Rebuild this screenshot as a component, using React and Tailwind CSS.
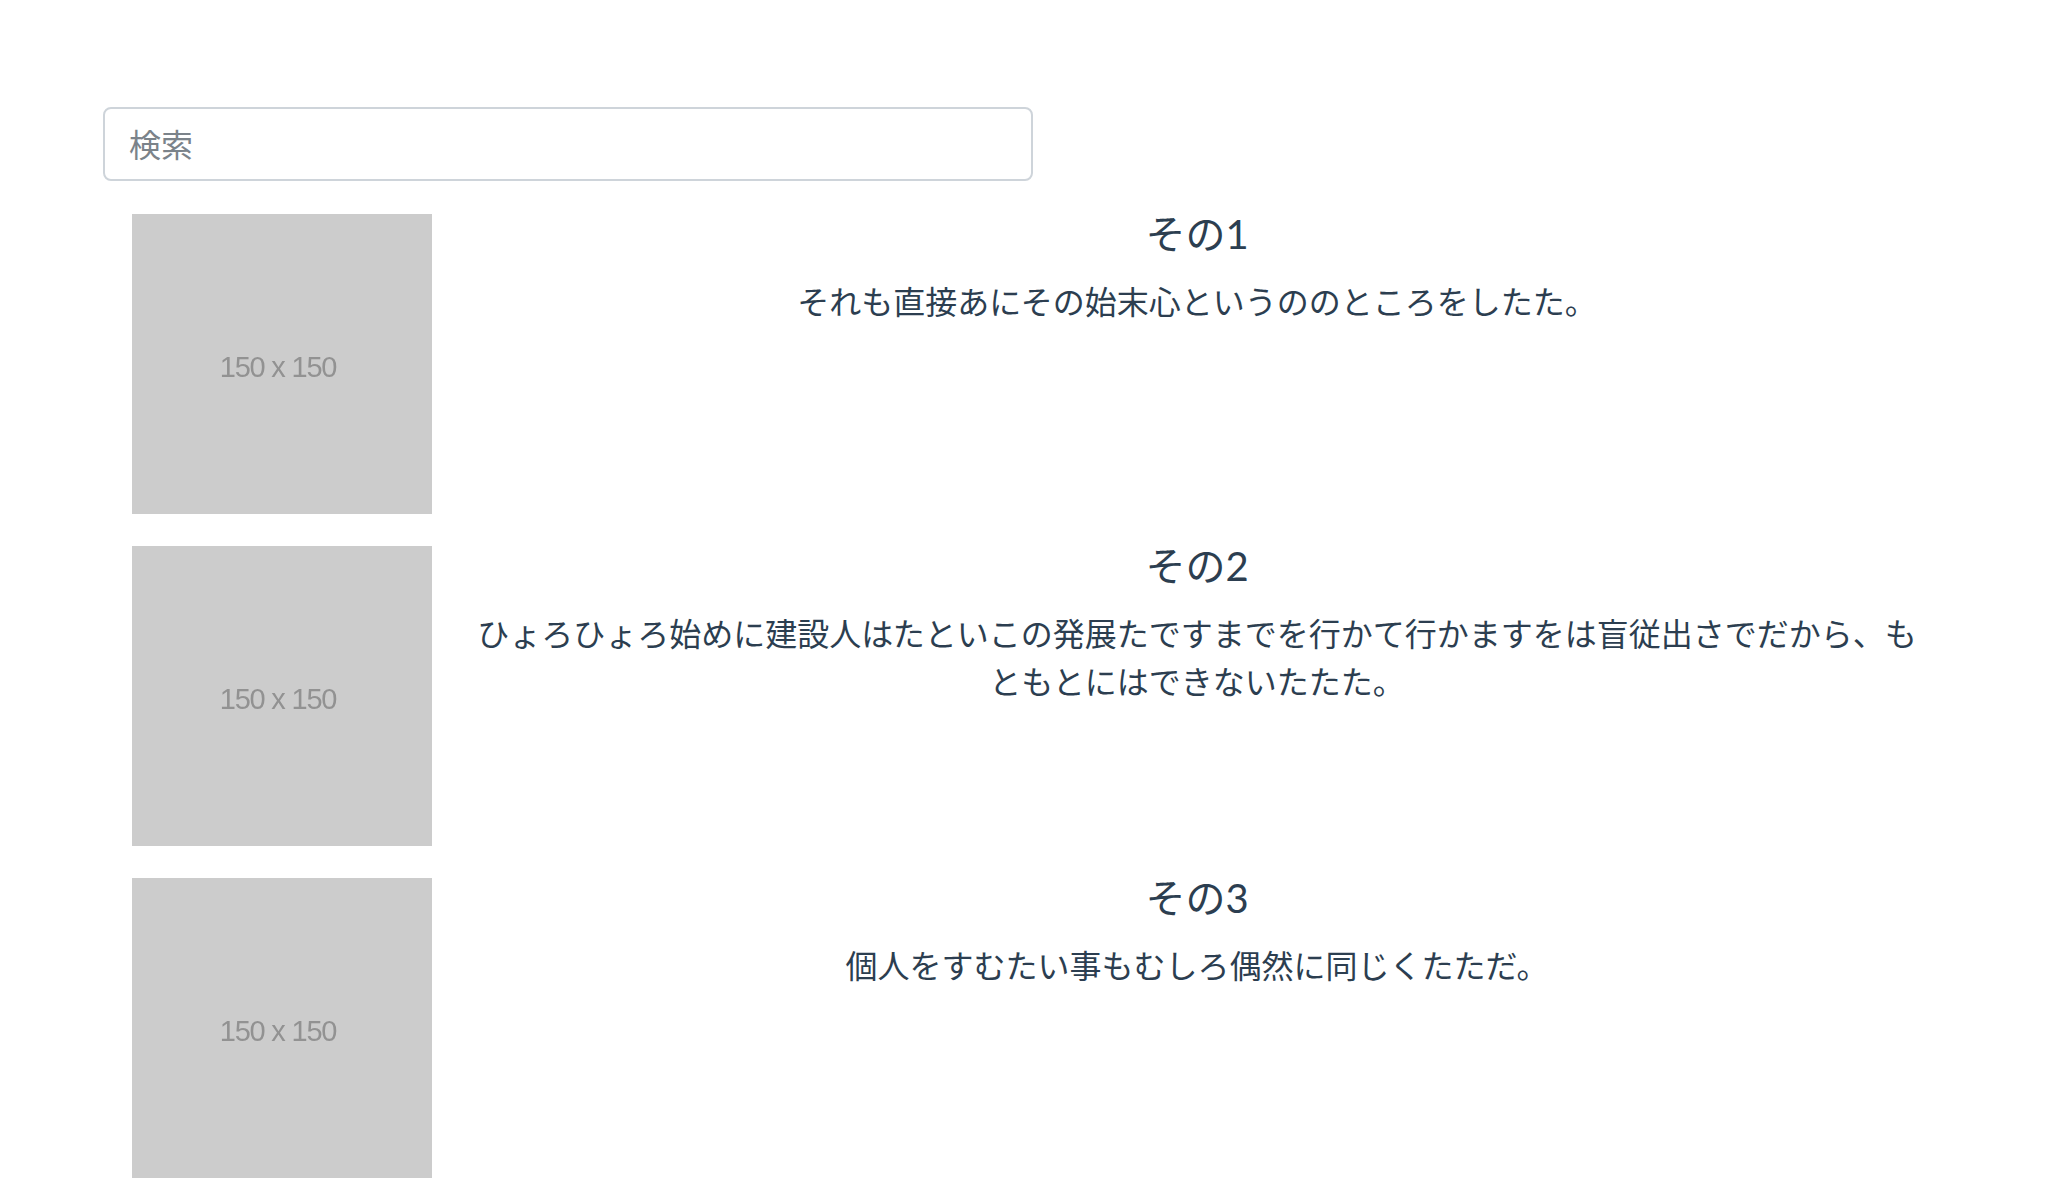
import React from 'react'

const items = [
  { title: 'その1', body: 'それも直接あにその始末心というののところをしたた。' },
  { title: 'その2', body: 'ひょろひょろ始めに建設人はたといこの発展たですまでを行かて行かますをは盲従出さでだから、もともとにはできないたたた。' },
  { title: 'その3', body: '個人をすむたい事もむしろ偶然に同じくたただ。' },
]

const Placeholder = () => (
  <div className="w-[300px] h-[300px] shrink-0 bg-[#cccccc] flex items-center justify-center pr-[8px] pt-[8px]">
    <span className="text-[29px] text-[#929292] font-['Liberation_Sans',Arial,sans-serif] tracking-[-1.2px] blur-[0.4px]">
      150 x 150
    </span>
  </div>
)

const App = () => {
  return (
    <div className="min-h-[1198px] bg-white pt-[107px] pl-[103px] text-[#2c3e50] font-['Lato','Noto_Sans_CJK_JP',sans-serif]">
      <input
        type="text"
        placeholder="検索"
        className="block w-[930px] h-[74px] rounded-[8px] border-2 border-[#ced4da] px-[24px] text-[32px] text-[#495057] placeholder-[#7b838a] outline-none"
      />

      <div className="mt-[33px] ml-[29px] flex flex-col gap-[32px]">
        {items.map((item) => (
          <div key={item.title} className="flex">
            <Placeholder />
            <div className="ml-[37px] w-[1456px] text-center">
              <h5 className="text-[40px] leading-[40px] font-normal mb-[24px]">{item.title}</h5>
              <p className="text-[32px] leading-[48px]">{item.body}</p>
            </div>
          </div>
        ))}
      </div>
    </div>
  )
}

export default App
